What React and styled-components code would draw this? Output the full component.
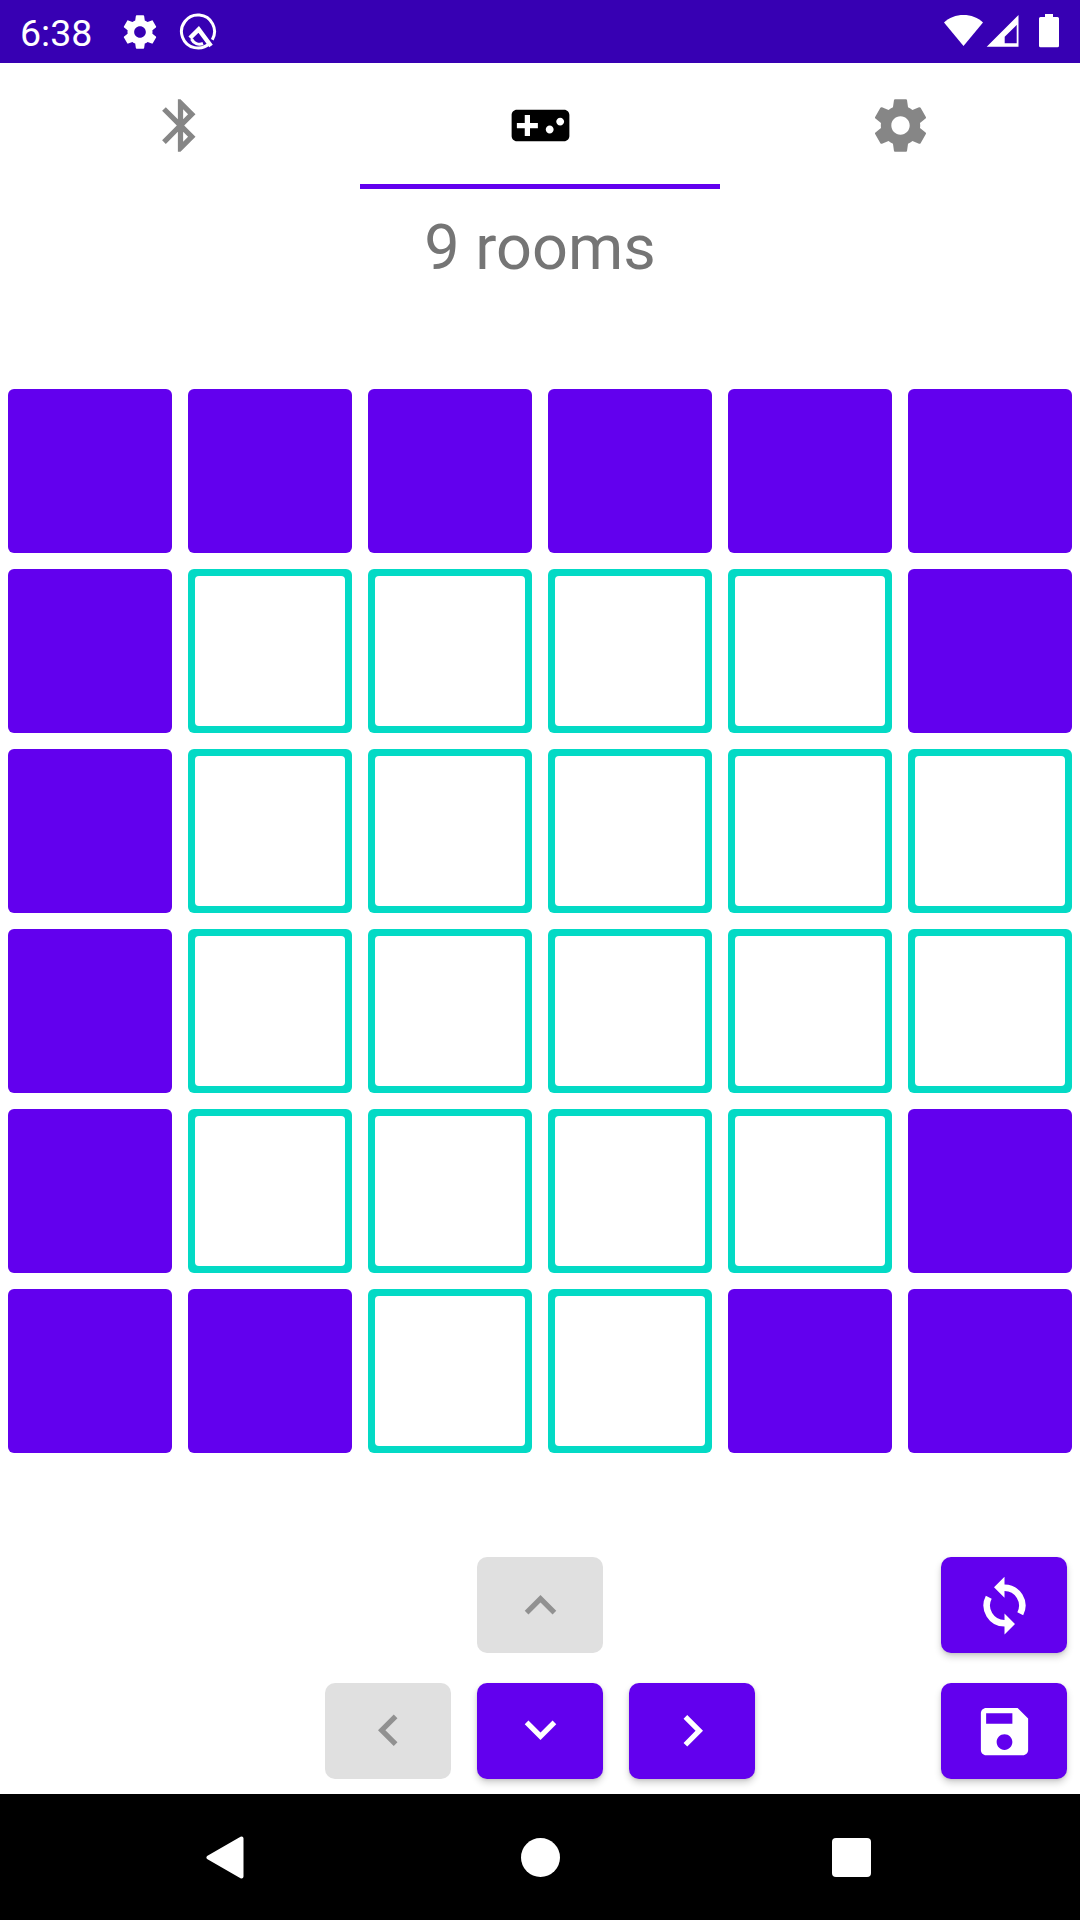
import React from 'react'
import styled, { createGlobalStyle } from 'styled-components';

const PURPLE = '#6200ee';
const TEAL = '#03dac5';

const GlobalStyle = createGlobalStyle`
    html, body { margin: 0; padding: 0; background: #fff; }
    body { font-family: Roboto, "Liberation Sans", sans-serif; }
`

const Screen = styled.div`
    width: 1080px;
    height: 1920px;
    display: flex;
    flex-direction: column;
    overflow: hidden;
    background: #fff;
`
const StatusBar = styled.div`
    height: 63px;
    flex: none;
    background: #3700b3;
    color: #fff;
    display: flex;
    align-items: center;
    padding: 0 20px;
`
const Clock = styled.div`
    font-size: 37.5px;
    line-height: 43px;
    padding-top: 3px;
    width: 82px;
`
const StatusGroup = styled.div`
    display: flex;
    align-items: center;
`
const StatusLeft = styled(StatusGroup)`
    flex: 1;
    gap: 18px;
`
const QSvg = styled.svg`
    margin-left: 1px;
`
const StatusRight = styled(StatusGroup)`
    gap: 2px;
    padding-bottom: 2px;
`
const BatterySvg = styled.svg`
    margin-left: 16px;
`
const Tabs = styled.div`
    height: 126px;
    flex: none;
    display: flex;
`
const Tab = styled.div`
    flex: 1;
    display: flex;
    align-items: center;
    justify-content: center;
    color: ${p => p.$active ? '#000' : '#868686'};
    border-bottom: 5px solid ${p => p.$active ? PURPLE : 'transparent'};
    padding-top: 3px;
`
const Title = styled.div`
    height: 200px;
    flex: none;
    box-sizing: border-box;
    padding-top: 22px;
    text-align: center;
    font-size: 63px;
    line-height: 74px;
    color: #757575;
`
const Board = styled.div`
    flex: none;
    display: grid;
    grid-template-columns: repeat(6, 164px);
    grid-auto-rows: 164px;
    gap: 16px;
    padding: 0 8px;
`
const Cell = styled.div`
    box-sizing: border-box;
    border-radius: 6px;
    background: ${p => p.$open ? TEAL : PURPLE};
    padding: 7px;
    &::after {
        content: '';
        display: ${p => p.$open ? 'block' : 'none'};
        height: 100%;
        background: #fff;
        border-radius: 4px;
    }
`
const Controls = styled.div`
    flex: 1;
    display: grid;
    grid-template-columns: 1fr auto 1fr;
    padding-top: 104px;
`
const Pad = styled.div`
    grid-column: 2;
    display: grid;
    grid-template-columns: repeat(3, 126px);
    grid-auto-rows: 96px;
    column-gap: 26px;
    row-gap: 30px;
`
const SideActions = styled.div`
    grid-column: 3;
    justify-self: end;
    margin-right: 13px;
    display: grid;
    grid-auto-rows: 96px;
    row-gap: 30px;
`
const Button = styled.div`
    width: 126px;
    display: flex;
    align-items: center;
    justify-content: center;
    border-radius: 10px;
    grid-column: ${p => p.$col || 'auto'};
    background: ${p => p.$disabled ? '#e0e0e0' : PURPLE};
    color: ${p => p.$disabled ? '#919191' : '#fff'};
    box-shadow: ${p => p.$disabled ? 'none' : '0 4px 7px rgba(0,0,0,0.18), 0 1px 3px rgba(0,0,0,0.1)'};
`
const NavBar = styled.div`
    height: 126px;
    flex: none;
    background: #000;
    display: grid;
    grid-template-columns: 315px 311px auto;
    align-items: center;
    justify-items: start;
    padding-left: 206px;
`

const rows = ['000000', '011110', '011111', '011111', '011110', '001100'];

const ICONS = {
    settings: 'M19.43 12.98c.04-.32.07-.64.07-.98s-.03-.66-.07-.98l2.11-1.65c.19-.15.24-.42.12-.64l-2-3.46c-.12-.22-.39-.3-.61-.22l-2.49 1c-.52-.4-1.08-.73-1.69-.98l-.38-2.65C14.46 2.18 14.25 2 14 2h-4c-.25 0-.46.18-.49.42l-.38 2.65c-.61.25-1.17.59-1.69.98l-2.49-1c-.23-.09-.49 0-.61.22l-2 3.46c-.13.22-.07.49.12.64l2.11 1.65c-.04.32-.07.65-.07.98s.03.66.07.98l-2.11 1.65c-.19.15-.24.42-.12.64l2 3.46c.12.22.39.3.61.22l2.49-1c.52.4 1.08.73 1.69.98l.38 2.65c.03.24.24.42.49.42h4c.25 0 .46-.18.49-.42l.38-2.65c.61-.25 1.17-.59 1.69-.98l2.49 1c.23.09.49 0 .61-.22l2-3.46c.12-.22.07-.49-.12-.64l-2.11-1.65zM12 15.500c-1.93 0-3.500-1.57-3.500-3.500s1.57-3.500 3.500-3.500 3.500 1.57 3.500 3.500-1.57 3.500-3.500 3.500z',
    bluetooth: 'M17.71 7.71L12 2h-1v7.59L6.41 5 5 6.41 10.59 12 5 17.59 6.41 19 11 14.41V22h1l5.71-5.71-4.3-4.29 4.3-4.29zM13 5.83l1.88 1.88L13 9.59V5.83zm1.88 10.46L13 18.17v-3.76l1.88 1.88z',
    game: 'M21 6H3c-1.1 0-2 .9-2 2v8c0 1.1.9 2 2 2h18c1.1 0 2-.9 2-2V8c0-1.1-.9-2-2-2zm-10 7H8v3H6v-3H3v-2h3V8h2v3h3v2zm4.500 2c-.83 0-1.500-.67-1.500-1.500s.67-1.500 1.500-1.500 1.500.67 1.500 1.500-.67 1.500-1.500 1.500zm4-3c-.83 0-1.500-.67-1.500-1.500S18.67 9 19.500 9s1.500.67 1.500 1.500-.67 1.500-1.500 1.500z',
    up: 'M7.41 15.41L12 10.83l4.59 4.58L18 14l-6-6-6 6z',
    down: 'M7.41 7.84L12 12.42l4.59-4.58L18 9.25l-6 6-6-6z',
    left: 'M15.41 16.09l-4.59-4.59 4.59-4.59L14 5.500l-6 6 6 6z',
    right: 'M8.59 16.34l4.58-4.59-4.58-4.59L10 5.75l6 6-6 6z',
    save: 'M17 3H5c-1.11 0-2 .9-2 2v14c0 1.1.89 2 2 2h14c1.1 0 2-.9 2-2V7l-4-4zm-5 16c-1.66 0-3-1.34-3-3s1.34-3 3-3 3 1.34 3 3-1.34 3-3 3zm3-10H5V5h10v4z',
};

function Icon({ name, size = 63 }) {
    return (
        <svg width={size} height={size} viewBox="0 0 24 24" fill="currentColor">
            <path d={ICONS[name]} />
        </svg>
    )
}

function SyncIcon() {
    return (
        <svg width="63" height="63" viewBox="0 0 24 24" fill="currentColor">
            <path d="M12 1L8 5L12 9ZM12 15L16 19L12 23Z" />
            <path d="M11.800 5.250H12A6.750 6.750 0 0 1 18 15.100M12.200 18.750H12A6.750 6.750 0 0 1 6 8.900" fill="none" stroke="currentColor" strokeWidth="2.500" />
        </svg>
    )
}

function QLogo() {
    return (
        <QSvg width="38" height="38" viewBox="0 0 38 38" fill="none">
            <path d="M30.670 30.170A16.500 16.500 0 1 1 33.290 26.750" stroke="#fff" strokeWidth="3" />
            <path d="M11 25L19.700 16.500L32 33" stroke="#fff" strokeWidth="4.500" />
            <path d="M12.500 26A9 9 0 0 0 24 30.500" stroke="#fff" strokeWidth="3" />
        </QSvg>
    )
}
function Wifi() {
    return (
        <svg width="41" height="34" viewBox="0 0 41 34">
            <path d="M1 8.500C6 3.500 13 1 20.500 1S35 3.500 40 8.500L20.500 32Z" fill="#fff" />
        </svg>
    )
}
function Signal() {
    return (
        <svg width="34" height="34" viewBox="0 0 34 34">
            <path fillRule="evenodd" d="M32.500 1V32.700H0.700ZM30.700 11L18.700 22.700V29.300H30.700Z" fill="#fff" />
        </svg>
    )
}
function Battery() {
    return (
        <BatterySvg width="22" height="36" viewBox="0 0 22 36">
            <path d="M7 1H15V4H19.500Q21 4 21 5.500V32.700Q21 34.200 19.500 34.200H2.500Q1 34.200 1 32.700V5.500Q1 4 2.500 4H7Z" fill="#fff" />
        </BatterySvg>
    )
}
function NavBack() {
    return (
        <svg width="39" height="43" viewBox="0 0 39 43">
            <path d="M2.500 21.500L35.500 2.500V40.500Z" fill="#fff" stroke="#fff" strokeWidth="4" strokeLinejoin="round" />
        </svg>
    )
}
function NavHome() {
    return (
        <svg width="39" height="39" viewBox="0 0 39 39">
            <circle cx="19.500" cy="19.500" r="19.500" fill="#fff" />
        </svg>
    )
}
function NavRecent() {
    return (
        <svg width="39" height="39" viewBox="0 0 39 39">
            <rect width="39" height="39" rx="4" fill="#fff" />
        </svg>
    )
}

export default function App() {
    return (
        <Screen>
            <GlobalStyle />
            <StatusBar>
                <StatusLeft>
                    <Clock>6:38</Clock>
                    <Icon name="settings" size={40} />
                    <QLogo />
                </StatusLeft>
                <StatusRight>
                    <Wifi />
                    <Signal />
                    <Battery />
                </StatusRight>
            </StatusBar>
            <Tabs>
                <Tab><Icon name="bluetooth" /></Tab>
                <Tab $active><Icon name="game" /></Tab>
                <Tab><Icon name="settings" /></Tab>
            </Tabs>
            <Title>9 rooms</Title>
            <Board>
                {rows.join('').split('').map((c, i) => <Cell key={i} $open={c === '1'} />)}
            </Board>
            <Controls>
                <Pad>
                    <Button $disabled $col={2}><Icon name="up" /></Button>
                    <Button $disabled $col={1}><Icon name="left" /></Button>
                    <Button><Icon name="down" /></Button>
                    <Button><Icon name="right" /></Button>
                </Pad>
                <SideActions>
                    <Button><SyncIcon /></Button>
                    <Button><Icon name="save" /></Button>
                </SideActions>
            </Controls>
            <NavBar>
                <NavBack />
                <NavHome />
                <NavRecent />
            </NavBar>
        </Screen>
    )
}
